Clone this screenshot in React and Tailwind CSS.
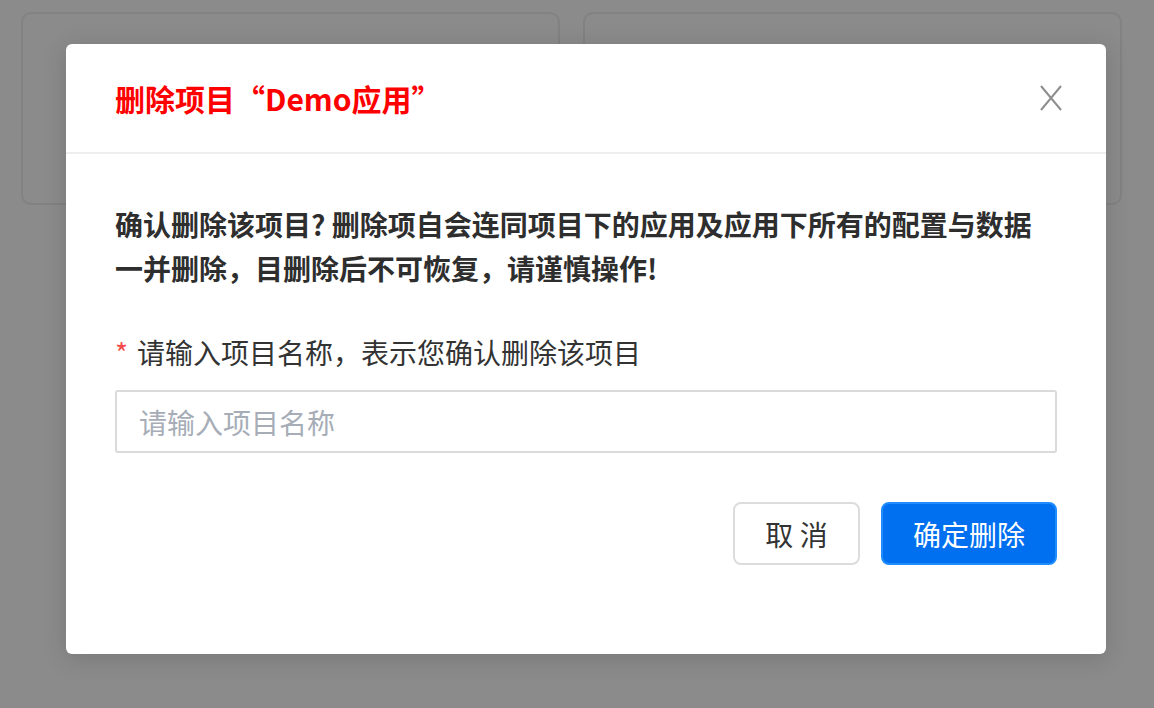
export default function App() {
  const font = { fontFamily: '"Noto Sans CJK SC", "Noto Sans", sans-serif' };

  return (
    <div className="relative h-[708px] w-full overflow-hidden bg-[#8b8b8b]" style={font}>
      {/* background cards behind the mask */}
      <div className="grid grid-cols-2 gap-[23px] pl-[21px] pr-[32px] pt-[12px]">
        <div className="h-[193px] rounded-[10px] border-2 border-[#828282]"></div>
        <div className="h-[193px] rounded-[10px] border-2 border-[#828282]"></div>
      </div>

      {/* Modal */}
      <div className="absolute left-[66px] top-[44px] w-[1040px] rounded-[6px] bg-white shadow-[0_4px_24px_rgba(0,0,0,0.15)]">
        <div className="flex h-[110px] items-center justify-between border-b-2 border-[#eeeeee] pl-[49px] pr-[44px]">
          <h2 className="text-[30px] font-bold leading-none text-[#ff0000]">删除项目“Demo应用”</h2>
          <button aria-label="关闭" className="flex h-[26px] w-[22px] items-center justify-center">
            <svg width="22" height="26" viewBox="0 0 22 26" fill="none" stroke="#8e8e8e" strokeWidth="2">
              <path d="M1 1 L21 25 M21 1 L1 25" />
            </svg>
          </button>
        </div>

        <div className="px-[49px] pb-[89px] pt-[48px]">
          <p className="text-[28px] font-bold leading-[44px] text-[#2e2e2e]">
            确认删除该项目? 删除项自会连同项目下的应用及应用下所有的配置与数据一并删除，目删除后不可恢复，请谨慎操作!
          </p>

          <label className="mt-[42px] flex items-center text-[28px] leading-[40px] text-[#333333]">
            <span className="mr-[9px] text-[#f24a4a]">*</span>
            请输入项目名称，表示您确认删除该项目
          </label>

          <input
            type="text"
            placeholder="请输入项目名称"
            className="mt-[18px] h-[63px] w-full rounded-[3px] border-2 border-[#dadada] px-[22px] text-[28px] text-[#333] outline-none placeholder:text-[#a6adb7]"
          />

          <div className="mt-[49px] flex justify-end gap-[21px]">
            <button className="h-[63px] w-[127px] rounded-[8px] border-2 border-[#dcdcdc] bg-white text-[28px] text-[#333]">
              取 消
            </button>
            <button className="h-[63px] w-[176px] rounded-[8px] border-2 border-[#1f8cff] bg-[#006ff0] text-[28px] text-white">
              确定删除
            </button>
          </div>
        </div>
      </div>
    </div>
  );
}
